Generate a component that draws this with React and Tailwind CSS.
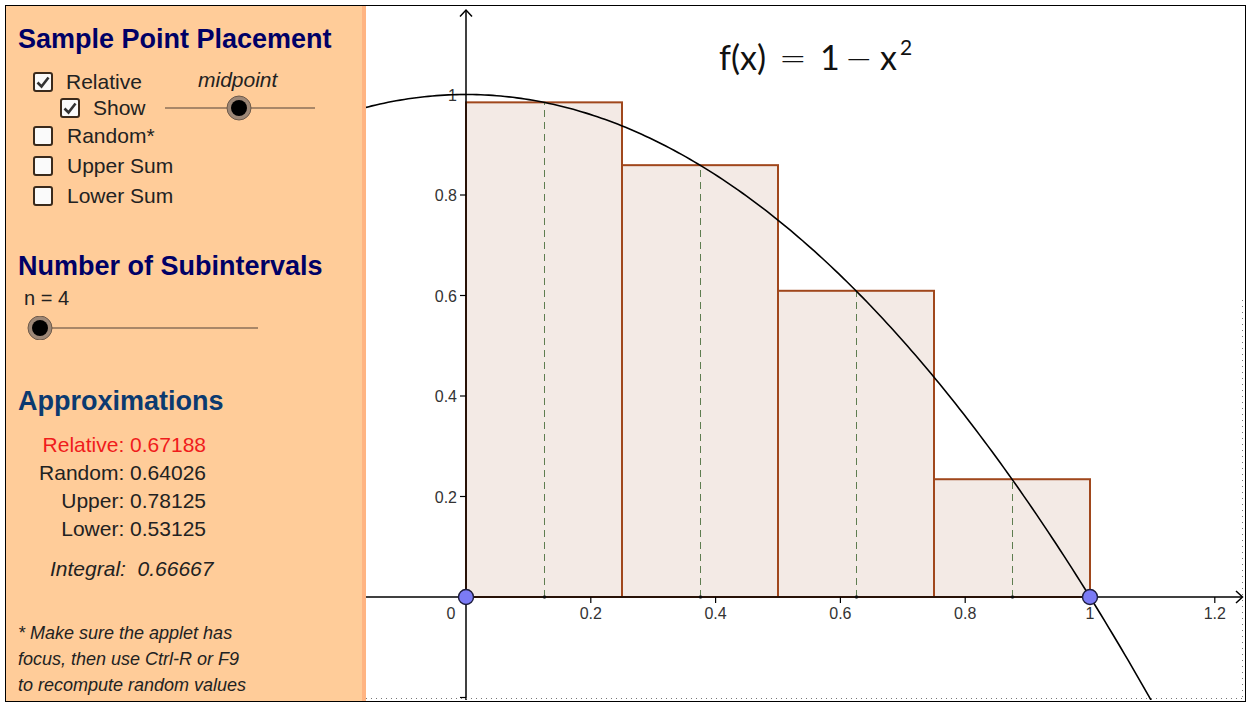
import React from 'react';

const font = { fontFamily: '"Liberation Sans", Arial, sans-serif' };

// graph mapping, page coordinates
const sx = (x) => 466 + 624 * x;
const sy = (y) => 597 - 502.5 * y;
const f = (x) => 1 - x * x;

function Checkbox({ checked }) {
  return (
    <div className="w-[20px] h-[20px] rounded-[3px] border-2 border-[#3a2a1c] bg-[#fafafa] flex items-center justify-center shrink-0">
      {checked && (
        <svg width="16" height="16" viewBox="0 0 16 16">
          <path d="M2.5 8.5 L6.5 12.5 L13.5 3.5" fill="none" stroke="#333" strokeWidth="2.6" />
        </svg>
      )}
    </div>
  );
}

function Knob({ cx, cy }) {
  return (
    <g>
      <circle cx={cx} cy={cy} r="12" fill="#9d8776" stroke="#6e5a4a" strokeWidth="1" />
      <circle cx={cx} cy={cy} r="8" fill="#000" />
    </g>
  );
}

function CheckRow({ checked, label }) {
  return (
    <div className="flex items-center h-[30px] pl-[27px] gap-[14px]">
      <Checkbox checked={checked} />
      <span className="text-[21px] text-[#222]">{label}</span>
    </div>
  );
}

function Panel() {
  return (
    <div className="w-[360px] h-full bg-[#FFCC99] border-r-4 border-[#FFB482] shrink-0" style={font}>
      <div className="mt-[18px] pl-[12px] h-[30px] leading-[30px] text-[27px] font-bold text-[#000066]">
        Sample Point Placement
      </div>

      <div className="mt-[15px] flex items-center h-[26px] pl-[27px]">
        <Checkbox checked />
        <span className="text-[21px] text-[#222] ml-[13px] w-[132px]">Relative</span>
        <span className="text-[21px] italic text-[#222] -mt-[4px]">midpoint</span>
      </div>
      <div className="flex items-center h-[26px] pl-[54px]">
        <Checkbox checked />
        <span className="text-[21px] text-[#222] ml-[13px] w-[67px]">Show</span>
        <svg width="160" height="26" className="shrink-0">
          <line x1="5" y1="13" x2="155" y2="13" stroke="#8c7058" strokeWidth="1.3" />
          <Knob cx={79} cy={13} />
        </svg>
      </div>
      <CheckRow label="Random*" />
      <CheckRow label="Upper Sum" />
      <CheckRow label="Lower Sum" />

      <div className="mt-[40px] pl-[12px] h-[30px] leading-[30px] text-[27px] font-bold text-[#000066]">
        Number of Subintervals
      </div>
      <div className="mt-[5px] pl-[18px] h-[24px] leading-[24px] text-[20px] text-[#222]">n = 4</div>
      <div className="mt-[6px] pl-[20px] h-[24px]">
        <svg width="240" height="24">
          <line x1="14" y1="12" x2="232" y2="12" stroke="#8c7058" strokeWidth="1.3" />
          <Knob cx={14} cy={12} />
        </svg>
      </div>

      <div className="mt-[46px] pl-[12px] h-[30px] leading-[30px] text-[27px] font-bold text-[#0b3a70]">
        Approximations
      </div>
      <div className="mt-[15px] w-[200px] text-right text-[21px] text-[#222]">
        <div className="h-[28px] leading-[28px] text-[#f01c1c]">Relative: 0.67188</div>
        <div className="h-[28px] leading-[28px]">Random: 0.64026</div>
        <div className="h-[28px] leading-[28px]">Upper: 0.78125</div>
        <div className="h-[28px] leading-[28px]">Lower: 0.53125</div>
      </div>
      <div className="mt-[12px] pl-[44px] h-[28px] leading-[28px] text-[21px] italic text-[#222] whitespace-pre">
        Integral:  0.66667
      </div>

      <div className="mt-[37px] pl-[12px] text-[18px] italic text-[#222] leading-[26px]">
        <div>* Make sure the applet has</div>
        <div>focus, then use Ctrl-R or F9</div>
        <div>to recompute random values</div>
      </div>
    </div>
  );
}

function Graph() {
  const n = 4;
  const dx = 1 / n;
  const rects = [];
  for (let i = 0; i < n; i++) {
    const a = i * dx;
    const m = a + dx / 2;
    rects.push({ a, b: a + dx, m, h: f(m) });
  }

  let d = '';
  for (let i = 0; i <= 200; i++) {
    const x = -0.17 + (1.12 + 0.17) * (i / 200);
    d += (i === 0 ? 'M' : 'L') + sx(x).toFixed(2) + ' ' + sy(f(x)).toFixed(2) + ' ';
  }

  const xTicks = [0.2, 0.4, 0.6, 0.8, 1, 1.2];
  const yTicks = [0.2, 0.4, 0.6, 0.8, 1];
  const label = { fontFamily: '"Liberation Sans", Arial, sans-serif', fontSize: 16, fill: '#333' };
  const math = { fontFamily: 'Lato, "DejaVu Sans", sans-serif', fontSize: 34, fill: '#111' };
  const op = { fontFamily: '"DejaVu Sans", sans-serif', fontSize: 33, fontWeight: 300 };

  return (
    <svg width="880" height="695" className="block shrink-0">
      <defs>
        <clipPath id="area">
          <rect x="366" y="6" width="878" height="694" />
        </clipPath>
      </defs>
      <g transform="translate(-366,-6)" clipPath="url(#area)">
        {/* rectangles */}
        {rects.map((r, i) => (
          <rect
            key={'r' + i}
            x={sx(r.a)}
            y={sy(r.h)}
            width={sx(r.b) - sx(r.a)}
            height={sy(0) - sy(r.h)}
            fill="#F3EAE5"
            stroke="#A0471C"
            strokeWidth="2"
          />
        ))}
        {/* sample lines */}
        {rects.map((r, i) => (
          <g key={'s' + i}>
            <line x1={sx(r.m) + 0.5} y1={sy(0)} x2={sx(r.m) + 0.5} y2={sy(r.h)} stroke="#5e7d50" strokeWidth="1" strokeDasharray="7 5" />
            <circle cx={sx(r.m) + 0.5} cy={sy(0)} r="1.8" fill="#333" />
          </g>
        ))}

        {/* axes */}
        <line x1="366" y1="597" x2="1242" y2="597" stroke="#000" strokeWidth="1.5" />
        <path d="M1236 591 L1242.5 597 L1236 603" fill="none" stroke="#000" strokeWidth="1.5" />
        <line x1="466" y1="700" x2="466" y2="10" stroke="#000" strokeWidth="1.5" />
        <path d="M460 16.5 L466 10 L472 16.5" fill="none" stroke="#000" strokeWidth="1.5" />

        {xTicks.map((t) => (
          <g key={'x' + t}>
            <line x1={sx(t)} y1="597" x2={sx(t)} y2="603" stroke="#000" strokeWidth="1.2" />
            <text x={sx(t)} y="619" textAnchor="middle" style={label}>{t}</text>
          </g>
        ))}
        <text x="451" y="619" textAnchor="middle" style={label}>0</text>
        {yTicks.map((t) => (
          <g key={'y' + t}>
            <line x1="460" y1={sy(t)} x2="466" y2={sy(t)} stroke="#000" strokeWidth="1.2" />
            <text x="457" y={sy(t) + 6} textAnchor="end" style={label}>{t}</text>
          </g>
        ))}
        <line x1="460" y1={sy(-0.2)} x2="466" y2={sy(-0.2)} stroke="#000" strokeWidth="1.2" />

        {/* function */}
        <path d={d} fill="none" stroke="#000" strokeWidth="1.6" />

        {/* end points */}
        <circle cx={sx(0)} cy={sy(0)} r="7.5" fill="#7b7bf5" stroke="#1c1c3c" strokeWidth="1.4" />
        <circle cx={sx(1)} cy={sy(0)} r="7.5" fill="#7b7bf5" stroke="#1c1c3c" strokeWidth="1.4" />

        {/* faint edge artifacts */}
        <line x1="366" y1="698.5" x2="1243" y2="698.5" stroke="#777" strokeWidth="1" strokeDasharray="1 4" />
        <line x1="1242.5" y1="300" x2="1242.5" y2="699" stroke="#777" strokeWidth="1" strokeDasharray="1 5" />

        {/* formula */}
        <text y="70" style={math}>
          <tspan x="719">f(x)</tspan>
          <tspan x="779" style={op}>=</tspan>
          <tspan x="820">1</tspan>
          <tspan x="845" style={op}>−</tspan>
          <tspan x="880">x</tspan>
          <tspan x="900" dy="-15" fontSize="21">2</tspan>
        </text>
      </g>
    </svg>
  );
}

export default function App() {
  return (
    <div className="w-[1253px] h-[709px] bg-white pt-[5px] pl-[5px] overflow-hidden">
      <div className="w-[1241px] h-[697px] border border-black flex overflow-hidden">
        <Panel />
        <Graph />
      </div>
    </div>
  );
}
